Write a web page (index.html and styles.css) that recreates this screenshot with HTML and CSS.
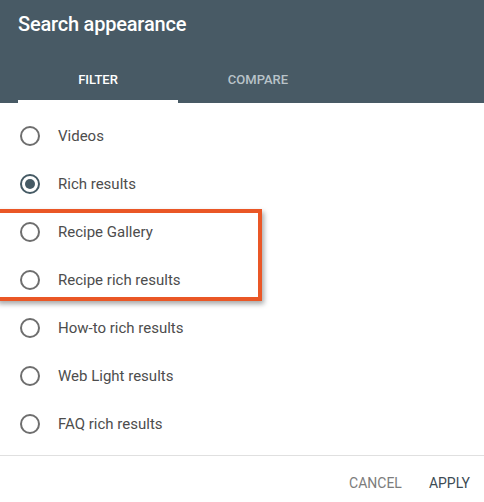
FILE: index.html
```html
<!DOCTYPE html>
<html lang="en">
  <head>
    <link rel="stylesheet" href="styles.css">
  </head>
  <body>
    <div class="dialog">
      <div class="header">
        <h2 class="title">Search appearance</h2>
        <div class="tabs">
          <div class="tab active">FILTER</div>
          <div class="tab">COMPARE</div>
        </div>
      </div>
      <div class="options">
        <div class="highlight"></div>
        <label class="option"><span class="radio"></span>Videos</label>
        <label class="option"><span class="radio checked"></span>Rich results</label>
        <label class="option"><span class="radio"></span>Recipe Gallery</label>
        <label class="option"><span class="radio"></span>Recipe rich results</label>
        <label class="option"><span class="radio"></span>How-to rich results</label>
        <label class="option"><span class="radio"></span>Web Light results</label>
        <label class="option"><span class="radio"></span>FAQ rich results</label>
      </div>
      <div class="actions">
        <button class="btn cancel">CANCEL</button>
        <button class="btn apply">APPLY</button>
      </div>
    </div>
  </body>
</html>
```
FILE: styles.css
```css
* {
  margin: 0;
  box-sizing: border-box;
}
body {
  font-family: Roboto, "Liberation Sans", sans-serif;
  background-color: white;
  overflow: hidden;
}
.header {
  height: 103px;
  background-color: #485a65;
  color: white;
  padding: 0 18px;
  display: flex;
  flex-direction: column;
  justify-content: space-between;
}
.title {
  font-size: 20px;
  font-weight: 500;
  padding-top: 12px;
  letter-spacing: -0.2px;
}
.tabs {
  display: flex;
}
.tab {
  width: 160px;
  text-align: center;
  font-size: 13px;
  font-weight: 500;
  color: #b9c3c9;
  padding-bottom: 13px;
  border-bottom: 3px solid transparent;
}
.tab.active {
  color: white;
  border-bottom-color: white;
}
.options {
  position: relative;
  padding: 9px 0 7px;
  border-bottom: 1px solid #e0e0e0;
}
.option {
  height: 48px;
  display: flex;
  align-items: center;
  padding-left: 20px;
  font-size: 15px;
  color: #4d4d4d;
}
.radio {
  width: 20px;
  height: 20px;
  border: 2px solid #6e6e6e;
  border-radius: 50%;
  margin-right: 18px;
  display: flex;
  align-items: center;
  justify-content: center;
}
.radio.checked {
  border-color: #455a64;
}
.radio.checked::after {
  content: "";
  width: 10px;
  height: 10px;
  border-radius: 50%;
  background-color: #455a64;
}
.highlight {
  position: absolute;
  left: -4px;
  top: 106px;
  width: 266px;
  height: 92px;
  border: 4px solid #ea5726;
  box-shadow: 2px 3px 5px rgba(0, 0, 0, 0.35);
}
.actions {
  height: 52px;
  display: flex;
  justify-content: flex-end;
  align-items: center;
  padding: 2px 6px 0 0;
  gap: 4px;
}
.btn {
  background: none;
  border: none;
  font-family: Roboto, "Liberation Sans", sans-serif;
  font-size: 14px;
  padding: 8px 8px;
}
.cancel {
  color: #7c7c7c;
  margin-right: 7px;
}
.apply {
  color: #3d4b54;
}
```
